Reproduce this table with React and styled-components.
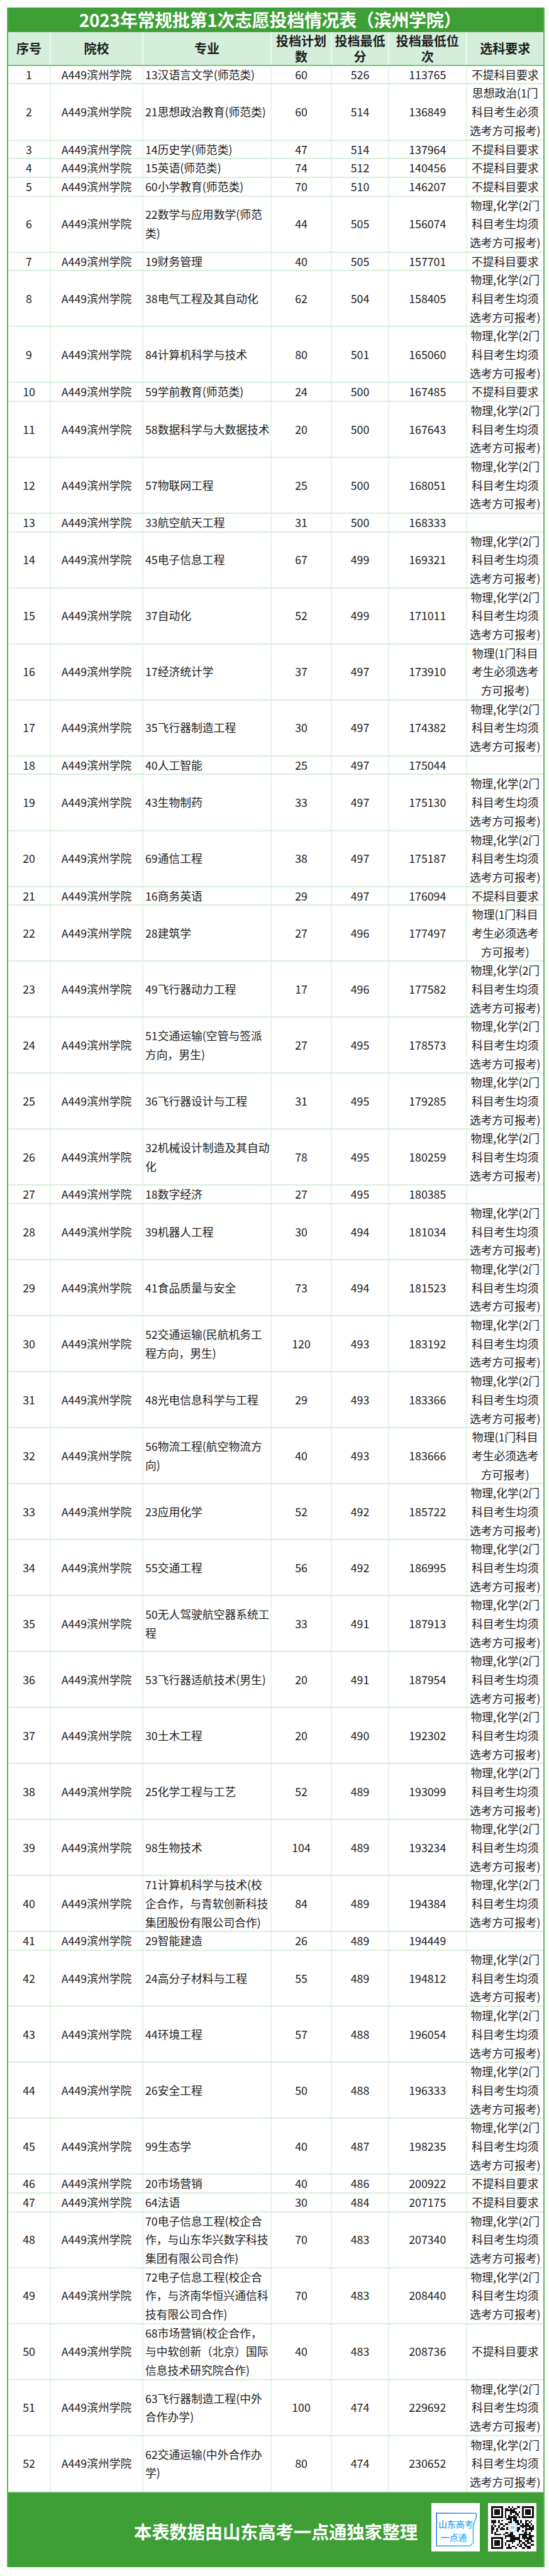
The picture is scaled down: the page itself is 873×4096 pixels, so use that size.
import React from 'react'
import styled, { createGlobalStyle } from 'styled-components'

const GlobalStyle = createGlobalStyle`
  html, body {
    margin: 0;
    padding: 0;
    background: #fff;
  }
  body {
    font-family: "Noto Sans CJK SC", "Noto Sans", sans-serif;
    color: #222;
  }
`

// one text line of the sheet, in px
const LINE = 29.68
const COLS = '68px 147px 204px 96px 91px 123.5px 121.5px'

const NONE = ['不提科目要求']
const POL = ['思想政治(1门', '科目考生必须', '选考方可报考)']
const PC = ['物理,化学(2门', '科目考生均须', '选考方可报考)']
const PHY = ['物理(1门科目', '考生必须选考', '方可报考)']
const EMPTY = []

const rows = [
  [1, ['13汉语言文学(师范类)'], 60, 526, 113765, NONE],
  [2, ['21思想政治教育(师范类)'], 60, 514, 136849, POL],
  [3, ['14历史学(师范类)'], 47, 514, 137964, NONE],
  [4, ['15英语(师范类)'], 74, 512, 140456, NONE],
  [5, ['60小学教育(师范类)'], 70, 510, 146207, NONE],
  [6, ['22数学与应用数学(师范', '类)'], 44, 505, 156074, PC],
  [7, ['19财务管理'], 40, 505, 157701, NONE],
  [8, ['38电气工程及其自动化'], 62, 504, 158405, PC],
  [9, ['84计算机科学与技术'], 80, 501, 165060, PC],
  [10, ['59学前教育(师范类)'], 24, 500, 167485, NONE],
  [11, ['58数据科学与大数据技术'], 20, 500, 167643, PC],
  [12, ['57物联网工程'], 25, 500, 168051, PC],
  [13, ['33航空航天工程'], 31, 500, 168333, EMPTY],
  [14, ['45电子信息工程'], 67, 499, 169321, PC],
  [15, ['37自动化'], 52, 499, 171011, PC],
  [16, ['17经济统计学'], 37, 497, 173910, PHY],
  [17, ['35飞行器制造工程'], 30, 497, 174382, PC],
  [18, ['40人工智能'], 25, 497, 175044, EMPTY],
  [19, ['43生物制药'], 33, 497, 175130, PC],
  [20, ['69通信工程'], 38, 497, 175187, PC],
  [21, ['16商务英语'], 29, 497, 176094, NONE],
  [22, ['28建筑学'], 27, 496, 177497, PHY],
  [23, ['49飞行器动力工程'], 17, 496, 177582, PC],
  [24, ['51交通运输(空管与签派', '方向，男生)'], 27, 495, 178573, PC],
  [25, ['36飞行器设计与工程'], 31, 495, 179285, PC],
  [26, ['32机械设计制造及其自动', '化'], 78, 495, 180259, PC],
  [27, ['18数字经济'], 27, 495, 180385, EMPTY],
  [28, ['39机器人工程'], 30, 494, 181034, PC],
  [29, ['41食品质量与安全'], 73, 494, 181523, PC],
  [30, ['52交通运输(民航机务工', '程方向，男生)'], 120, 493, 183192, PC],
  [31, ['48光电信息科学与工程'], 29, 493, 183366, PC],
  [32, ['56物流工程(航空物流方', '向)'], 40, 493, 183666, PHY],
  [33, ['23应用化学'], 52, 492, 185722, PC],
  [34, ['55交通工程'], 56, 492, 186995, PC],
  [35, ['50无人驾驶航空器系统工', '程'], 33, 491, 187913, PC],
  [36, ['53飞行器适航技术(男生)'], 20, 491, 187954, PC],
  [37, ['30土木工程'], 20, 490, 192302, PC],
  [38, ['25化学工程与工艺'], 52, 489, 193099, PC],
  [39, ['98生物技术'], 104, 489, 193234, PC],
  [40, ['71计算机科学与技术(校', '企合作，与青软创新科技', '集团股份有限公司合作)'], 84, 489, 194384, PC],
  [41, ['29智能建造'], 26, 489, 194449, EMPTY],
  [42, ['24高分子材料与工程'], 55, 489, 194812, PC],
  [43, ['44环境工程'], 57, 488, 196054, PC],
  [44, ['26安全工程'], 50, 488, 196333, PC],
  [45, ['99生态学'], 40, 487, 198235, PC],
  [46, ['20市场营销'], 40, 486, 200922, NONE],
  [47, ['64法语'], 30, 484, 207175, NONE],
  [48, ['70电子信息工程(校企合', '作，与山东华兴数字科技', '集团有限公司合作)'], 70, 483, 207340, PC],
  [49, ['72电子信息工程(校企合', '作，与济南华恒兴通信科', '技有限公司合作)'], 70, 483, 208440, PC],
  [50, ['68市场营销(校企合作，', '与中软创新（北京）国际', '信息技术研究院合作)'], 40, 483, 208736, NONE],
  [51, ['63飞行器制造工程(中外', '合作办学)'], 100, 474, 229692, PC],
  [52, ['62交通运输(中外合作办', '学)'], 80, 474, 230652, PC],
]

const Page = styled.div`
  padding: 12px 0 12px 11px;
`

const Sheet = styled.div`
  width: 855px;
  box-sizing: border-box;
  border-left: 2px solid #5db658;
  border-right: 2px solid #5db658;
`

const TitleBar = styled.div`
  height: 38.8px;
  background: #3d9f36;
  color: #fff;
  font-size: 28px;
  font-weight: 700;
  line-height: 38.8px;
  text-align: center;
  padding-right: 18px;
  letter-spacing: -0.3px;
`

const HeadRow = styled.div`
  display: grid;
  grid-template-columns: ${COLS};
  height: 54px;
  box-sizing: border-box;
  background: #d4eedb;
  border-bottom: 2px solid #74c576;
`

const HeadCell = styled.div`
  display: flex;
  align-items: center;
  justify-content: center;
  text-align: center;
  font-size: 20px;
  font-weight: 700;
  line-height: 25px;
  color: #1e1e1e;
  border-right: 2px solid #eef8f0;
  &:last-child {
    border-right: none;
  }
`

const Row = styled.div`
  display: grid;
  grid-template-columns: ${COLS};
  height: ${(p) => p.$lines * LINE}px;
  box-sizing: border-box;
  border-bottom: 2px solid #d9efdc;
`

const Cell = styled.div`
  display: flex;
  align-items: center;
  justify-content: ${(p) => (p.$left ? 'flex-start' : 'center')};
  padding-left: ${(p) => (p.$left ? '3px' : '0')};
  text-align: ${(p) => (p.$left ? 'left' : 'center')};
  font-size: 17.8px;
  line-height: ${LINE}px;
  white-space: nowrap;
  color: #222;
  border-right: 2px solid #e8f4ea;
  overflow: hidden;
  &:last-child {
    border-right: none;
  }
`

const Lines = styled.div`
  display: flex;
  flex-direction: column;
  align-items: ${(p) => (p.$left ? 'flex-start' : 'center')};
`

const Footer = styled.div`
  display: grid;
  grid-template-columns: 1fr auto 1fr;
  align-items: center;
  height: 119.6px;
  background: #3d9f36;
`

const FooterText = styled.div`
  grid-column: 2;
  color: #fff;
  font-size: 28.4px;
  font-weight: 700;
  letter-spacing: -0.2px;
  padding-top: 4px;
`

const Badges = styled.div`
  grid-column: 3;
  display: flex;
  justify-content: flex-end;
  gap: 13px;
  padding-right: 11px;
  margin-bottom: 8px;
`

const Card = styled.div`
  width: 77px;
  height: 77px;
  background: #fff;
  display: flex;
  align-items: center;
  justify-content: center;
`

function Logo() {
  return (
    <Card>
      <svg width="77" height="77" viewBox="0 0 95 95">
        <defs>
          <linearGradient id="lg" x1="0" y1="0" x2="1" y2="1">
            <stop offset="0" stopColor="#2f6fe6" />
            <stop offset="1" stopColor="#3fd0f2" />
          </linearGradient>
        </defs>
        <path d="M10 84 V20 H88 V28 L82 44 V78 L76 84 Z" fill="none" stroke="url(#lg)" strokeWidth="2" />
        <text x="48" y="48" textAnchor="middle" fontSize="17" fontWeight="500" fill="url(#lg)"
          fontFamily='"Noto Sans CJK SC", sans-serif'>山东高考</text>
        <text x="44" y="74" textAnchor="middle" fontSize="17" fontWeight="500" fill="url(#lg)"
          fontFamily='"Noto Sans CJK SC", sans-serif'>一点通</text>
      </svg>
    </Card>
  )
}

// a fixed pseudo-random module pattern for the QR picture
const QR_N = 25
const qrModules = (() => {
  let seed = 20231
  const rnd = () => {
    seed = (seed * 1103515245 + 12345) % 2147483648
    return seed / 2147483648
  }
  const out = []
  const inFinder = (x, y) =>
    (x < 8 && y < 8) || (x >= QR_N - 8 && y < 8) || (x < 8 && y >= QR_N - 8)
  const inCenter = (x, y) => x >= 10 && x <= 14 && y >= 10 && y <= 14
  for (let y = 0; y < QR_N; y++) {
    for (let x = 0; x < QR_N; x++) {
      if (inFinder(x, y) || inCenter(x, y)) continue
      if (rnd() < 0.52) out.push([x, y])
    }
  }
  return out
})()

function Finder({ x, y }) {
  return (
    <g>
      <rect x={x} y={y} width="7" height="7" fill="#111" />
      <rect x={x + 1} y={y + 1} width="5" height="5" fill="#fff" />
      <rect x={x + 2} y={y + 2} width="3" height="3" fill="#111" />
    </g>
  )
}

function QrCode() {
  return (
    <Card>
      <svg width="68" height="68" viewBox={`0 0 ${QR_N} ${QR_N}`} shapeRendering="crispEdges">
        {qrModules.map(([x, y]) => (
          <rect key={`${x}-${y}`} x={x} y={y} width="1" height="1" fill="#111" />
        ))}
        <Finder x={0} y={0} />
        <Finder x={QR_N - 7} y={0} />
        <Finder x={0} y={QR_N - 7} />
        <rect x="10.5" y="10.5" width="4" height="4" fill="#fff" stroke="#8ec9ee" strokeWidth="0.4" />
        <rect x="11.3" y="11.8" width="2.4" height="1.4" fill="#8ec9ee" />
      </svg>
    </Card>
  )
}

function App() {
  return (
    <Page>
      <GlobalStyle />
      <Sheet>
        <TitleBar>2023年常规批第1次志愿投档情况表（滨州学院）</TitleBar>
        <HeadRow>
          <HeadCell>序号</HeadCell>
          <HeadCell>院校</HeadCell>
          <HeadCell>专业</HeadCell>
          <HeadCell>投档计划<br />数</HeadCell>
          <HeadCell>投档最低<br />分</HeadCell>
          <HeadCell>投档最低位<br />次</HeadCell>
          <HeadCell>选科要求</HeadCell>
        </HeadRow>
        {rows.map(([no, major, plan, score, rank, req]) => {
          const lines = Math.max(1, major.length, req.length)
          return (
            <Row key={no} $lines={lines}>
              <Cell>{no}</Cell>
              <Cell>A449滨州学院</Cell>
              <Cell $left>
                <Lines $left>
                  {major.map((t) => <span key={t}>{t}</span>)}
                </Lines>
              </Cell>
              <Cell>{plan}</Cell>
              <Cell>{score}</Cell>
              <Cell>{rank}</Cell>
              <Cell>
                <Lines>
                  {req.map((t) => <span key={t}>{t}</span>)}
                </Lines>
              </Cell>
            </Row>
          )
        })}
        <Footer>
          <FooterText>本表数据由山东高考一点通独家整理</FooterText>
          <Badges>
            <Logo />
            <QrCode />
          </Badges>
        </Footer>
      </Sheet>
    </Page>
  )
}

export default App
